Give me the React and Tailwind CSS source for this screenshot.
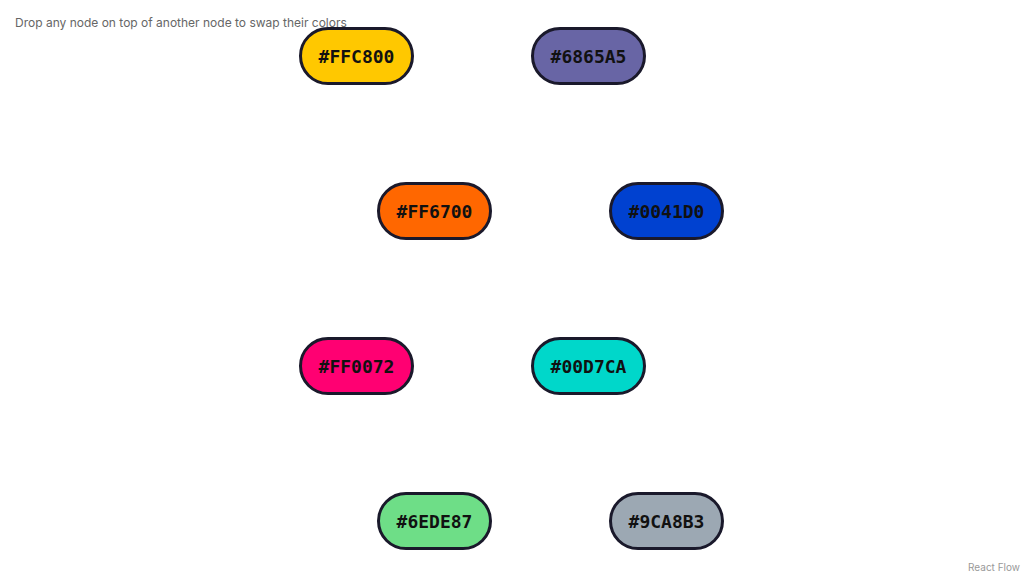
import React from "react";

const nodes = [
  { c: "#FFC800", x: 299, y: 27 },
  { c: "#6865A5", x: 531, y: 27 },
  { c: "#FF6700", x: 377, y: 182 },
  { c: "#0041D0", x: 609, y: 182 },
  { c: "#FF0072", x: 299, y: 337 },
  { c: "#00D7CA", x: 531, y: 337 },
  { c: "#6EDE87", x: 377, y: 492 },
  { c: "#9CA8B3", x: 609, y: 492 },
];

export default function App() {
  return (
    <div className="relative w-[1024px] h-[576px] bg-white overflow-hidden" style={{ fontFamily: "Inter, 'Liberation Sans', sans-serif" }}>
      <div className="absolute left-[15px] top-[15px] text-[12px] text-[#666] leading-[16px]">
        Drop any node on top of another node to swap their colors
      </div>
      {nodes.map((n) => (
        <div
          key={n.c}
          className="absolute w-[115px] h-[58px] rounded-full border-[3px] border-[#1a192b] flex items-center justify-center text-[18px] font-bold text-[#111]"
          style={{ left: n.x, top: n.y, backgroundColor: n.c, fontFamily: "'DejaVu Sans Mono', monospace" }}
        >
          {n.c}
        </div>
      ))}
      <div className="absolute right-0 bottom-0 px-[4px] py-[2px] bg-white text-[10px] text-[#999] leading-[14px]">
        React Flow
      </div>
    </div>
  );
}
